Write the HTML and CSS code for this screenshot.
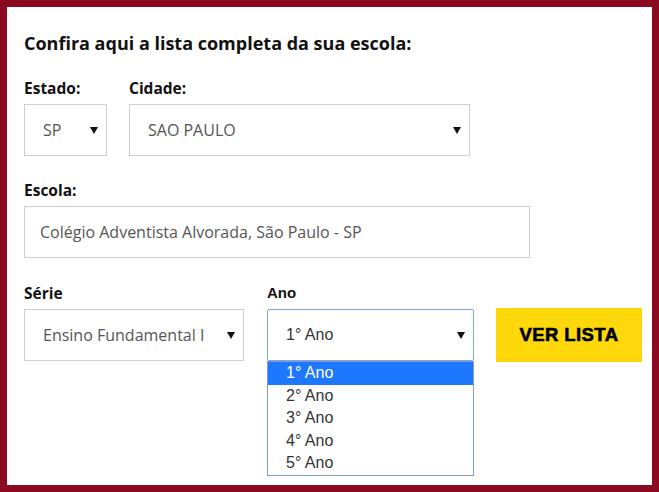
FILE: index.html
```html
<!DOCTYPE html>
<html lang="pt-BR">
<head>
<meta charset="utf-8">
<title>Lista de material</title>
<link rel="stylesheet" href="styles.css">
</head>
<body>
<div class="frame">
  <h1 class="title">Confira aqui a lista completa da sua escola:</h1>

  <div class="row r1">
    <div class="field f-estado">
      <div class="label">Estado:</div>
      <div class="select"><span class="val">SP</span><span class="arrow"></span></div>
    </div>
    <div class="field f-cidade">
      <div class="label">Cidade:</div>
      <div class="select"><span class="val">SAO PAULO</span><span class="arrow"></span></div>
    </div>
  </div>

  <div class="row r2">
    <div class="field f-escola">
      <div class="label">Escola:</div>
      <div class="select input"><span class="val">Colégio Adventista Alvorada, São Paulo - SP</span></div>
    </div>
  </div>

  <div class="row r3">
    <div class="field f-serie">
      <div class="label">Série</div>
      <div class="select"><span class="val">Ensino Fundamental I</span><span class="arrow"></span></div>
    </div>
    <div class="field f-ano">
      <div class="label arial">Ano</div>
      <div class="select focus arial"><span class="val">1° Ano</span><span class="arrow"></span></div>
      <ul class="options">
        <li class="sel">1° Ano</li>
        <li>2° Ano</li>
        <li>3° Ano</li>
        <li>4° Ano</li>
        <li>5° Ano</li>
      </ul>
    </div>
    <button class="btn">VER LISTA</button>
  </div>
</div>
</body>
</html>
```

FILE: styles.css
```css
* { box-sizing: border-box; }
html, body { margin: 0; padding: 0; background: #fff; }
body { font-family: "Open Sans", "Liberation Sans", sans-serif; color: #1a1a1a; }

.frame {
  width: 659px;
  height: 492px;
  border: 7px solid #8c0a21;
  padding: 24px 0 0 17px;
  overflow: hidden;
}

.title {
  margin: 0 0 23px 0;
  font-size: 18px;
  line-height: 24px;
  font-weight: 700;
  color: #111;
}

.row {
  display: flex;
  align-items: flex-end;
  gap: 23px;
}
.r1 { gap: 22px; margin-bottom: 24px; }
.r2 { margin-bottom: 25px; }

.field { position: relative; flex: none; }

.label {
  font-weight: 700;
  font-size: 15.5px;
  line-height: 20px;
  margin-bottom: 6px;
  color: #111;
}

.select {
  height: 52px;
  border: 1px solid #cfcfcf;
  background: #fff;
  display: flex;
  align-items: center;
  padding-left: 18px;
  padding-right: 8px;
  font-size: 16px;
  color: #555;
}
.select .val { flex: 1; white-space: nowrap; overflow: hidden; }
.arrow {
  width: 0; height: 0;
  border-left: 4px solid transparent;
  border-right: 4px solid transparent;
  border-top: 7px solid #111;
  margin-left: 6px;
}

.f-estado { width: 83px; }
.f-cidade { width: 341px; }
.f-escola { width: 506px; }
.input { padding-left: 15px; }
.f-serie { width: 220px; }
.f-ano { width: 207px; }

.arial { font-family: "Liberation Sans", Arial, sans-serif; }
.label.arial { font-size: 15px; }
.select.arial { font-size: 16px; color: #333; }

.focus {
  border-color: #7fa3df;
  border-radius: 2px;
}

.options {
  position: absolute;
  left: 0;
  top: 100%;
  width: 207px;
  margin: 0;
  padding: 0;
  list-style: none;
  border: 1px solid #7f9ccc;
  background: #fff;
  font-family: "Liberation Sans", Arial, sans-serif;
  font-size: 16px;
  color: #333;
}
.options li {
  height: 22.5px;
  line-height: 22.5px;
  padding-left: 18px;
}
.options li.sel { background: #1e78ff; color: #fff; }

.btn {
  flex: none;
  width: 146px;
  height: 54px;
  border: 0;
  background: #ffd80b;
  font-family: "Liberation Sans", Arial, sans-serif;
  font-weight: 700;
  font-size: 18.5px;
  letter-spacing: 0.4px;
  -webkit-text-stroke: 0.6px #000;
  color: #000;
  padding: 0;
  margin-bottom: -1px;
  margin-left: -1px;
}
```
